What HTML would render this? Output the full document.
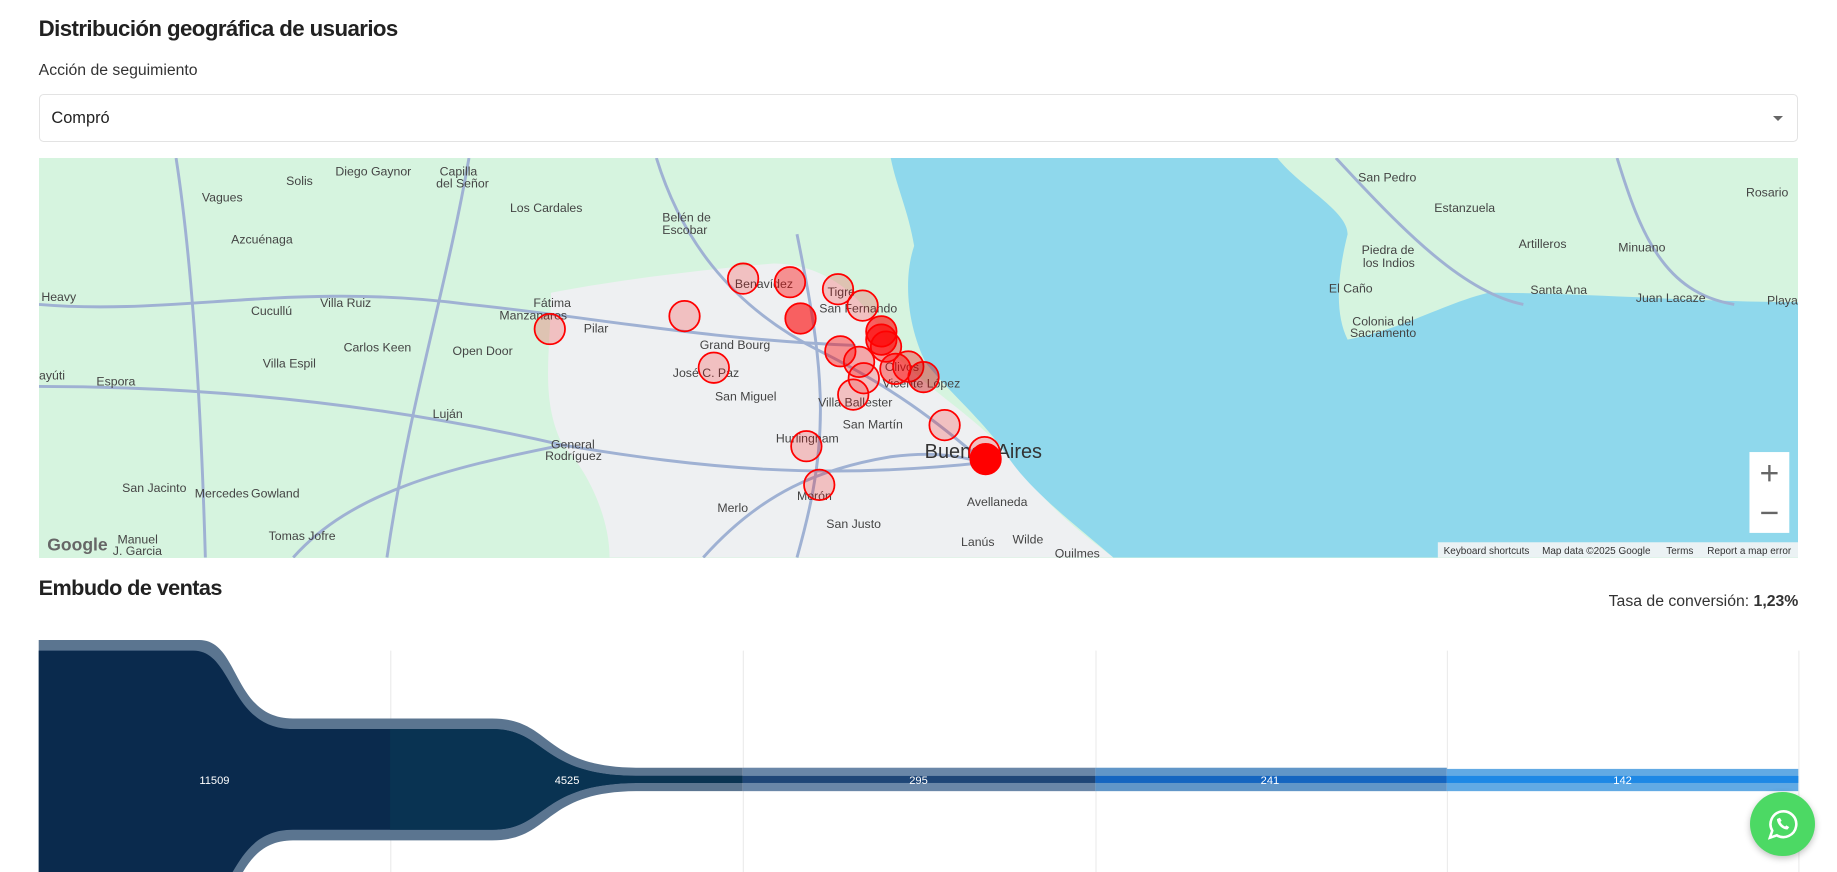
<!DOCTYPE html>
<html><head><meta charset="utf-8"><style>
html,body{margin:0;padding:0;background:#fff;overflow:hidden;width:1837px;height:872px}
#w{zoom:1.17156;width:1568px;height:744px;position:relative;overflow:hidden;font-family:"Liberation Sans",sans-serif;color:#212121}
h1{position:absolute;left:33px;top:14px;margin:0;font-size:19px;font-weight:600;letter-spacing:-0.5px}
.lbl{position:absolute;left:33px;top:53px;font-size:13.5px;color:#333}
.sel{position:absolute;left:33px;top:80px;width:1502px;height:41px;border:1px solid #e3e3e3;border-radius:4px;box-sizing:border-box}
.sel span{position:absolute;left:10px;top:12px;font-size:14px}
.sel i{position:absolute;right:12px;top:18px;border-left:5px solid transparent;border-right:5px solid transparent;border-top:5px solid #666}
#map{position:absolute;left:33px;top:135px;width:1502px;height:341px;overflow:hidden;background:#d6f4df}
h2{position:absolute;left:33px;top:491px;margin:0;font-size:18.5px;font-weight:600;letter-spacing:-0.5px}
.tasa{position:absolute;right:33px;top:506px;font-size:13.5px;color:#333}
.wa{position:absolute;left:1494px;top:676px;width:55px;height:55px;border-radius:50%;background:#4cd964;box-shadow:0 2px 6px rgba(0,0,0,.25)}
</style></head><body><div id="w">
<h1>Distribución geográfica de usuarios</h1>
<div class="lbl">Acción de seguimiento</div>
<div class="sel"><span>Compró</span><i></i></div>
<div id="map">
<svg width="1502" height="341" viewBox="33 135 1502 341" style="display:block">
<rect x="33" y="135" width="1502" height="341" fill="#d6f4df"/>
<path d="M470 250 C520 240 600 230 660 225 C700 225 740 250 760 300 C800 340 840 360 870 400 C900 440 930 460 950 476 L520 476 C520 440 500 400 480 380 C460 340 470 300 470 250Z" fill="#eef0f2"/>
<path d="M760 135 L1090 135 C1110 160 1150 180 1150 200 C1140 240 1140 270 1150 290 C1200 280 1230 260 1270 250 C1350 250 1450 258 1535 258 L1535 476 L950 476 C920 450 880 420 860 390 C840 360 810 335 790 310 C775 280 770 240 780 210 C775 180 765 160 760 135Z" fill="#8fd8ec"/>
<g stroke="#9fb1d3" stroke-width="2.5" fill="none">
<path d="M33 330 C200 330 350 350 480 380 C600 400 700 410 840 395"/>
<path d="M150 135 C160 200 170 300 175 476"/>
<path d="M400 135 C380 250 350 340 330 476"/>
<path d="M33 260 C150 270 250 240 400 260 C500 270 600 290 730 295"/>
<path d="M560 135 C580 200 620 260 700 300 C760 330 800 360 840 395"/>
<path d="M600 476 C650 420 700 400 760 390 C800 385 820 390 840 395"/>
<path d="M250 476 C300 420 380 400 480 380"/>
<path d="M1140 135 C1200 200 1250 250 1300 260"/>
<path d="M1380 135 C1400 200 1420 250 1480 260"/>
<path d="M680 200 C690 250 700 300 700 350 C700 400 690 440 680 476"/>
</g>
<g font-size="10.5" fill="#444" font-family="Liberation Sans,sans-serif">
<text x="172" y="172">Vagues</text><text x="244" y="158">Solis</text><text x="286" y="150">Diego Gaynor</text>
<text x="375" y="150">Capilla</text><text x="372" y="160">del Señor</text><text x="435" y="181">Los Cardales</text>
<text x="565" y="189">Belén de</text><text x="565" y="200">Escobar</text><text x="197" y="208">Azcuénaga</text>
<text x="35" y="257">Heavy</text><text x="214" y="269">Cucullú</text><text x="273" y="262">Villa Ruiz</text>
<text x="455" y="262">Fátima</text><text x="426" y="273">Manzanares</text><text x="498" y="284">Pilar</text>
<text x="293" y="300">Carlos Keen</text><text x="386" y="303">Open Door</text><text x="597" y="298">Grand Bourg</text>
<text x="224" y="314">Villa Espil</text><text x="33" y="324">ayúti</text><text x="82" y="329">Espora</text>
<text x="574" y="322">José C. Paz</text><text x="610" y="342">San Miguel</text><text x="698" y="347">Villa Ballester</text>
<text x="369" y="357">Luján</text><text x="470" y="383">General</text><text x="465" y="393">Rodríguez</text>
<text x="719" y="366">San Martín</text><text x="662" y="378">Hurlingham</text>
<text x="104" y="420">San Jacinto</text><text x="166" y="425">Mercedes</text><text x="214" y="425">Gowland</text>
<text x="612" y="437">Merlo</text><text x="680" y="427">Morón</text><text x="825" y="432">Avellaneda</text>
<text x="705" y="451">San Justo</text><text x="100" y="464">Manuel</text><text x="96" y="474">J. Garcia</text>
<text x="229" y="461">Tomas Jofre</text><text x="820" y="466">Lanús</text><text x="864" y="464">Wilde</text><text x="900" y="476">Quilmes</text>
<text x="627" y="246">Benavídez</text><text x="706" y="253">Tigre</text><text x="699" y="267">San Fernando</text>
<text x="753" y="331">Vicente López</text><text x="755" y="317">Olivos</text>
<text x="1159" y="155">San Pedro</text><text x="1224" y="181">Estanzuela</text><text x="1490" y="168">Rosario</text>
<text x="1162" y="217">Piedra de</text><text x="1163" y="228">los Indios</text><text x="1296" y="212">Artilleros</text><text x="1381" y="215">Minuano</text>
<text x="1134" y="250">El Caño</text><text x="1306" y="251">Santa Ana</text><text x="1396" y="258">Juan Lacaze</text><text x="1508" y="260">Playa</text>
<text x="1154" y="278">Colonia del</text><text x="1152" y="288">Sacramento</text>
<text x="789" y="391" font-size="17" fill="#333">Buenos Aires</text>
<text x="40" y="470" font-size="15" fill="#666" font-weight="bold">Google</text>
</g>
<g stroke="#ff0000" stroke-width="1.5">
<circle cx="469" cy="281" r="13" fill="rgba(255,0,0,.2)"/><circle cx="584" cy="270" r="13" fill="rgba(255,0,0,.2)"/>
<circle cx="634" cy="238" r="13" fill="rgba(255,0,0,.2)"/><circle cx="674" cy="241" r="13" fill="rgba(255,0,0,.4)"/>
<circle cx="683" cy="272" r="13" fill="rgba(255,0,0,.6)"/><circle cx="609" cy="314" r="13" fill="rgba(255,0,0,.2)"/>
<circle cx="715" cy="247" r="13" fill="rgba(255,0,0,.2)"/><circle cx="736" cy="261" r="13" fill="rgba(255,0,0,.2)"/>
<circle cx="717" cy="300" r="13" fill="rgba(255,0,0,.4)"/><circle cx="733" cy="309" r="13" fill="rgba(255,0,0,.3)"/>
<circle cx="728" cy="337" r="13" fill="rgba(255,0,0,.2)"/><circle cx="737" cy="323" r="13" fill="rgba(255,0,0,.2)"/>
<circle cx="752" cy="283" r="13" fill="rgba(255,0,0,.6)"/><circle cx="752" cy="290" r="13" fill="rgba(255,0,0,.6)"/>
<circle cx="756" cy="296" r="13" fill="rgba(255,0,0,.4)"/><circle cx="764" cy="315" r="13" fill="rgba(255,0,0,.4)"/>
<circle cx="775" cy="313" r="13" fill="rgba(255,0,0,.35)"/><circle cx="788" cy="322" r="13" fill="rgba(200,0,0,.4)"/>
<circle cx="806" cy="363" r="13" fill="rgba(255,0,0,.2)"/><circle cx="688" cy="381" r="13" fill="rgba(255,0,0,.2)"/>
<circle cx="699" cy="414" r="13" fill="rgba(255,0,0,.2)"/><circle cx="840" cy="386" r="13" fill="rgba(255,0,0,.2)"/>
<circle cx="841" cy="392" r="13" fill="#ff0000"/>
</g>
<rect x="1493" y="386" width="34" height="69" fill="#fff"/>
<path d="M1503 404h14M1510 397v14M1503 438h14" stroke="#666" stroke-width="2"/>
<rect x="1227" y="463" width="308" height="13" fill="rgba(245,245,245,.9)"/>
<g font-size="8.5" fill="#333"><text x="1232" y="473">Keyboard shortcuts</text><text x="1316" y="473">Map data ©2025 Google</text><text x="1422" y="473">Terms</text><text x="1457" y="473">Report a map error</text></g>
</svg>
</div>
<h2>Embudo de ventas</h2>
<div class="tasa">Tasa de conversión: <b>1,23%</b></div>
<svg style="position:absolute;left:0;top:540px;overflow:hidden" width="1568" height="204" viewBox="0 540 1568 204">
<g stroke="#ececec" stroke-width="1"><path d="M333.5 555V744M634.5 555V744M935.5 555V744M1235.5 555V744M1535.5 555V744"/></g>
<path d="M33 546 L170 546 C205 546 198 613 250 613 L420 613 C472 613 462 655 545 655 L634 655 L634 675 L545 675 C462 675 472 717 420 717 L250 717 C198 717 205 784 170 784 L33 784Z" fill="#5b7590"/>
<path d="M33 555 L165 555 C200 555 195 622 250 622 L420 622 C467 622 460 662 545 662 L634 662 L634 668 L545 668 C460 668 467 708 420 708 L250 708 C195 708 200 775 165 775 L33 775Z" fill="#0a2a4d"/>
<path d="M333 622 L420 622 C467 622 460 662 545 662 L634 662 L634 668 L545 668 C460 668 467 708 420 708 L333 708Z" fill="#093352"/>
<rect x="634" y="655" width="301" height="20" fill="#6a87a8"/><rect x="634" y="662" width="301" height="6" fill="#1f4677"/>
<rect x="935" y="655" width="300" height="20" fill="#6196c8"/><rect x="935" y="662" width="300" height="6" fill="#1565c0"/>
<rect x="1235" y="656" width="300" height="19" fill="#62aae4"/><rect x="1235" y="662" width="300" height="6" fill="#1e88e5"/>
<g fill="#fff" font-size="9.5" text-anchor="middle" font-family="Liberation Sans,sans-serif">
<text x="183" y="669">11509</text><text x="484" y="669">4525</text><text x="784" y="669">295</text><text x="1084" y="669">241</text><text x="1385" y="669">142</text></g>
</svg>
<div class="wa"><svg width="55" height="55" viewBox="0 0 55 55"><path d="M17 39l2-6a11 11 0 1 1 4 4z" fill="none" stroke="#fff" stroke-width="2.2"/><path d="M23 23c0 4 4 9 9 9l1.5-2-2.5-1.5-1 1c-2-1-3-2-4-4l1-1-1.5-2.5z" fill="#fff"/></svg></div>
</div></body></html>
